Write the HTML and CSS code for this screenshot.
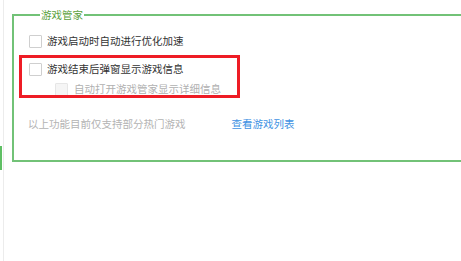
FILE: index.html
```html
<!DOCTYPE html>
<html lang="zh-CN">
<head>
<meta charset="utf-8">
<link rel="stylesheet" href="styles.css">
</head>
<body>
<div class="page">
  <div class="side"><div class="side-mark"></div></div>
  <div class="main">
    <fieldset class="group">
      <legend class="group-title">游戏管家</legend>
      <div class="row row-first">
        <span class="box"></span><span class="label">游戏启动时自动进行优化加速</span>
      </div>
      <div class="row row-second">
        <span class="box"></span><span class="label">游戏结束后弹窗显示游戏信息</span>
      </div>
      <div class="row row-sub">
        <span class="box box-disabled"></span><span class="label label-disabled">自动打开游戏管家显示详细信息</span>
      </div>
      <div class="note-row">
        <span class="note">以上功能目前仅支持部分热门游戏</span>
        <a class="link">查看游戏列表</a>
      </div>
    </fieldset>
  </div>
  <div class="highlight"></div>
</div>
</body>
</html>
```
FILE: styles.css
```css
html, body {
  margin: 0;
  padding: 0;
  background: #ffffff;
}
.page {
  position: relative;
  display: flex;
  width: 461px;
  height: 261px;
  overflow: hidden;
  font-family: "Noto Sans CJK SC", "Noto Sans", sans-serif;
  font-size: 10.5px;
  line-height: 14px;
}
.side {
  width: 3px;
  flex: none;
  border-right: 1px solid #ececec;
}
.side-mark {
  margin-top: 146px;
  width: 2px;
  height: 24px;
  background: #5fbf64;
}
.main {
  flex: none;
  padding: 8px 0 0 8px;
}
.group {
  margin: 0;
  width: 520px;
  padding: 12px 0 29px 15px;
  border: 2px solid #72c277;
  border-right: none;
}
.group-title {
  margin-left: 11px;
  padding: 0 1px;
  color: #5a9f3c;
  line-height: 14px;
}
.row {
  display: flex;
  align-items: center;
  height: 14px;
}
.row-second {
  margin-top: 14px;
}
.row-sub {
  margin-top: 6px;
  padding-left: 26px;
}
.box {
  width: 11px;
  height: 11px;
  border: 1px solid #cfcfcf;
  border-radius: 1px;
  background: #fff;
  margin-right: 5px;
  flex: none;
}
.box-disabled {
  border-color: #e6e6e6;
  background: #f5f5f5;
  margin-right: 6px;
}
.label {
  color: #333333;
}
.label-disabled {
  color: #b0b0b0;
}
.note-row {
  display: flex;
  align-items: center;
  height: 14px;
  margin-top: 21px;
  margin-left: -1px;
  gap: 46px;
}
.note {
  color: #b3b3b3;
}
.link {
  color: #3f93e3;
  cursor: pointer;
}
.highlight {
  position: absolute;
  left: 19px;
  top: 55px;
  width: 215px;
  height: 37px;
  border: 3px solid #ee1c25;
}
```
